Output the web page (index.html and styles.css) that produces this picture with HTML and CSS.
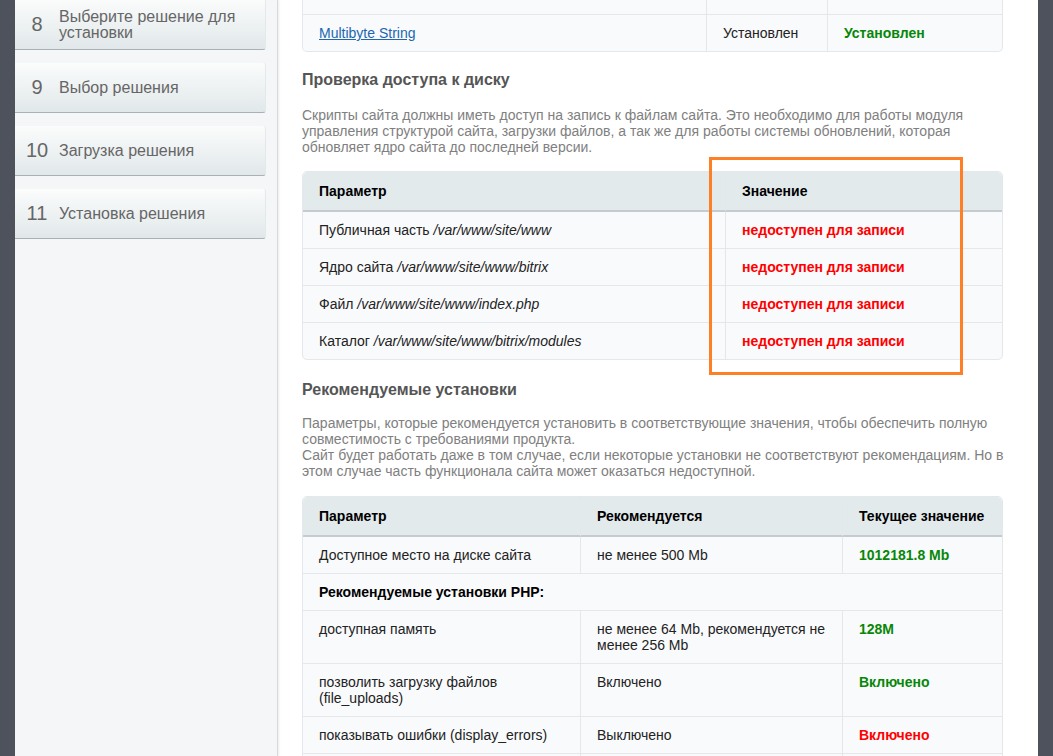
FILE: index.html
```html
<!DOCTYPE html>
<html lang="ru">
<head>
    <meta charset="UTF-8">
    <meta name="viewport" content="width=device-width, initial-scale=1.0">
    <title>Установка продукта</title>
    <link rel="stylesheet" href="styles.css">
</head>
<body>
    <div class="page">
        <div class="sidebar">
            <div class="step step-first">
                <span class="num">8</span>
                <span class="label">Выберите решение для установки</span>
            </div>
            <div class="step">
                <span class="num">9</span>
                <span class="label">Выбор решения</span>
            </div>
            <div class="step">
                <span class="num">10</span>
                <span class="label">Загрузка решения</span>
            </div>
            <div class="step">
                <span class="num">11</span>
                <span class="label">Установка решения</span>
            </div>
        </div>

        <div class="content">
            <table class="grid grid-top">
                <tr class="row-hidden">
                    <td class="c1-1"><a href="#">Zlib Compr</a></td>
                    <td class="c1-2">Установлен</td>
                    <td><span class="ok">Установлен</span></td>
                </tr>
                <tr>
                    <td class="c1-1"><a href="#">Multibyte String</a></td>
                    <td class="c1-2">Установлен</td>
                    <td><span class="ok">Установлен</span></td>
                </tr>
            </table>

            <h2>Проверка доступа к диску</h2>
            <p class="note">Скрипты сайта должны иметь доступ на запись к файлам сайта. Это необходимо для работы модуля управления структурой сайта, загрузки файлов, а так же для работы системы обновлений, которая обновляет ядро сайта до последней версии.</p>

            <div class="marked">
                <table class="grid">
                    <tr>
                        <th class="c2-1">Параметр</th>
                        <th>Значение</th>
                    </tr>
                    <tr>
                        <td class="c2-1">Публичная часть <i>/var/www/site/www</i></td>
                        <td><span class="bad">недоступен для записи</span></td>
                    </tr>
                    <tr>
                        <td class="c2-1">Ядро сайта <i>/var/www/site/www/bitrix</i></td>
                        <td><span class="bad">недоступен для записи</span></td>
                    </tr>
                    <tr>
                        <td class="c2-1">Файл <i>/var/www/site/www/index.php</i></td>
                        <td><span class="bad">недоступен для записи</span></td>
                    </tr>
                    <tr>
                        <td class="c2-1">Каталог <i>/var/www/site/www/bitrix/modules</i></td>
                        <td><span class="bad">недоступен для записи</span></td>
                    </tr>
                </table>
                <div class="highlight"></div>
            </div>

            <h2 class="h-second">Рекомендуемые установки</h2>
            <p class="note note-second">Параметры, которые рекомендуется установить в соответствующие значения, чтобы обеспечить полную совместимость с требованиями продукта.<br>Сайт будет работать даже в том случае, если некоторые установки не соответствуют рекомендациям. Но в этом случае часть функционала сайта может оказаться недоступной.</p>

            <table class="grid">
                <tr>
                    <th class="c3-1">Параметр</th>
                    <th class="c3-2">Рекомендуется</th>
                    <th>Текущее значение</th>
                </tr>
                <tr>
                    <td class="c3-1">Доступное место на диске сайта</td>
                    <td class="c3-2">не менее 500 Mb</td>
                    <td><span class="ok">1012181.8 Mb</span></td>
                </tr>
                <tr>
                    <td colspan="3" class="subhead">Рекомендуемые установки PHP:</td>
                </tr>
                <tr>
                    <td class="c3-1">доступная память</td>
                    <td class="c3-2">не менее 64 Mb, рекомендуется не менее 256 Mb</td>
                    <td><span class="ok">128M</span></td>
                </tr>
                <tr>
                    <td class="c3-1">позволить загрузку файлов (file_uploads)</td>
                    <td class="c3-2">Включено</td>
                    <td><span class="ok">Включено</span></td>
                </tr>
                <tr>
                    <td class="c3-1">показывать ошибки (display_errors)</td>
                    <td class="c3-2">Выключено</td>
                    <td><span class="bad">Включено</span></td>
                </tr>
                <tr>
                    <td class="c3-1">короткие теги (short_open_tag)</td>
                    <td class="c3-2">Включено</td>
                    <td><span class="ok">Включено</span></td>
                </tr>
            </table>
        </div>
    </div>
</body>
</html>
```

FILE: styles.css
```css
html, body {
    margin: 0;
    padding: 0;
    height: 100%;
    overflow: hidden;
}

body {
    background-color: #4d525d;
    font-family: "Liberation Sans", Arial, sans-serif;
}

.page {
    display: flex;
    margin: 0 15px;
    height: 100%;
    background-color: #fff;
}

/* left column with steps */
.sidebar {
    width: 262px;
    flex-shrink: 0;
    background-color: #f4f6f8;
    border-right: 1px solid #d6dadc;
    box-shadow: 1px 0 2px rgba(0, 0, 0, .08);
}

.step {
    display: flex;
    align-items: center;
    width: 250px;
    height: 49px;
    margin-bottom: 13px;
    background: linear-gradient(#fbfcfc, #e1e8ea);
    border-bottom: 1px solid #a9b1b4;
    border-right: 1px solid #e3e8ea;
    border-radius: 0 3px 3px 0;
    box-sizing: content-box;
    color: #666;
}

.step-first {
    height: 50px;
    margin-top: -1px;
}

.step-first .label {
    padding-top: 2px;
}

.num {
    width: 44px;
    flex-shrink: 0;
    text-align: center;
    font-size: 20px;
}

.label {
    font-size: 16px;
    line-height: 16px;
    padding-right: 20px;
}

/* main column */
.content {
    flex: 1;
    padding: 0 35px 0 24px;
}

h2 {
    margin: 18px 0 0;
    font-size: 16px;
    line-height: 20px;
    color: #555;
}

.note {
    margin: 17px -4px 16px 0;
    font-size: 14px;
    line-height: 16px;
    color: #808080;
}

.h-second {
    margin-top: 20px;
}

.note-second {
    margin: 15px -4px 17px 0;
}

.grid {
    width: 100%;
    border-collapse: separate;
    border-spacing: 0;
    border: 1px solid #e4e8ea;
    border-radius: 5px;
    background-color: #f9fafc;
    font-size: 14px;
    line-height: 16px;
    color: #222;
}

.grid-top {
    margin-top: -23px;
    border-top: none;
    border-radius: 0 0 5px 5px;
}

.grid-top .row-hidden td {
    padding: 6px 16px 14px;
}

.grid th {
    background-color: #e3eaec;
    text-align: left;
    color: #000;
    padding: 11px 16px 11px 16px;
    border-bottom: 2px solid #c5cbce;
}

.grid th:first-child {
    border-top-left-radius: 5px;
}

.grid th:last-child {
    border-top-right-radius: 5px;
}

.grid td {
    padding: 10px 16px;
    border-top: 1px solid #e4e8ea;
    vertical-align: top;
}

.grid tr:nth-child(2) td {
    border-top: none;
}

.grid-top tr:nth-child(2) td {
    border-top: 1px solid #e4e8ea;
}

.grid th + th,
.grid td + td {
    border-left: 1px solid #e4e8ea;
}

.grid a {
    color: #2067b0;
}

.c1-1 { width: 371px; }
.c1-2 { width: 88px; }
.c2-1 { width: 390px; }
.c3-1 { width: 245px; }
.c3-2 { width: 229px; }

.subhead {
    font-weight: bold;
    color: #000;
}

.ok {
    color: #078707;
    font-weight: bold;
}

.bad {
    color: #ff0000;
    font-weight: bold;
}

.marked {
    position: relative;
}

.highlight {
    position: absolute;
    left: 407px;
    top: -14px;
    width: 248px;
    height: 212px;
    border: 3px solid #ff7f27;
}
```
